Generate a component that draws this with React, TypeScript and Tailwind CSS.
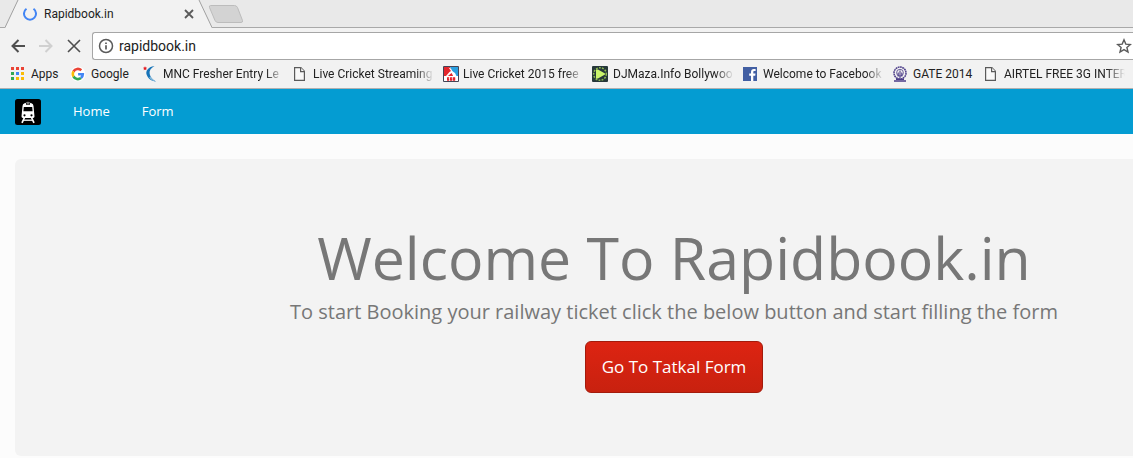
import React from "react";

function PageIcon() {
  return (
    <svg viewBox="0 0 16 16" className="size-4" fill="#f9f9f9" stroke="#5a5a5a" strokeWidth="1.2">
      <path d="M1.600 1.600h6.200l3.600 3.700v9.100H1.600z" />
      <path d="M7.600 1.600v4h3.800" />
    </svg>
  );
}

function AppsIcon() {
  const colors = ["#ea4335", "#ea4335", "#ea4335", "#34a853", "#4285f4", "#fbbc05", "#34a853", "#fbbc05", "#fbbc05"];
  return (
    <svg viewBox="0 0 16 16" className="size-4" shapeRendering="crispEdges">
      {colors.map((c, i) => (
        <rect key={i} x={(i % 3) * 5} y={1 + Math.floor(i / 3) * 5} width="3" height="3" fill={c} />
      ))}
    </svg>
  );
}

function GoogleIcon() {
  return (
    <svg viewBox="0 0 16 16" className="size-4">
      <circle cx="7" cy="8" r="7.4" fill="#fff" />
      <g fill="none" strokeWidth="2.6">
        <path d="M2.500 5.500A5 5 0 0 1 10.300 4.300" stroke="#ea4335" />
        <path d="M2.500 5.500A5 5 0 0 0 2.500 10.500" stroke="#fbbc05" />
        <path d="M2.500 10.500A5 5 0 0 0 10 12" stroke="#34a853" />
        <path d="M7.100 8.200H11.800A5 5 0 0 1 10 12" stroke="#4285f4" />
      </g>
    </svg>
  );
}

function MncIcon() {
  return (
    <svg viewBox="0 0 16 16" className="size-4">
      <path d="M11.500 0C4.500 1 2 5.500 4 9.500C5.500 12.800 8 15 13 15.500C9.500 13.500 7.300 11 6.700 8C6 4.800 7.800 2 11.500 0z" fill="#1673b8" />
      <path d="M6 11.500C8 14 10 15 13 15.500C10.500 14 9 13 7.500 11z" fill="#8fc1df" />
      <path d="M2 .300l.7 1.300 1.400.2-1 1 .3 1.400-1.400-.7-1.300.7.300-1.400-1-1 1.400-.2z" fill="#e21b22" />
    </svg>
  );
}

function CricketIcon() {
  return (
    <svg viewBox="0 0 16 16" className="size-4">
      <path d="M.5.500h15v15H.5z" fill="#fff" stroke="#445" />
      <path d="M1 1h6l3 9H1z" fill="#e4262c" />
      <path d="M7 1h8v9h-3z" fill="#2a9fe0" />
      <path d="M5.500 1.500 7.500 2.500 9 5l3 2 1.500 3H11L8.500 7 5.500 9.500 4.500 10H3l3.500-4L8 5z" fill="#fff" />
      <path d="M4 11.500h2v1H5v.5h1v1.500H4M7 11.500h2v1H8v.5h1v1.500H7M10 11.500h2v3h-2z" fill="#e4262c" stroke="#e4262c" strokeWidth=".5" />
    </svg>
  );
}

function MazaIcon() {
  return (
    <svg viewBox="0 0 16 16" className="-ml-px size-4">
      <rect width="16" height="16" rx="1" fill="#26383a" />
      <circle cx="8" cy="8" r="6.300" fill="none" stroke="#8fbd52" strokeWidth="1.500" strokeDasharray="1.800 1.300" />
      <path d="M4 3.500h2l7 4v1l-7 4H4z" fill="#c9f56c" />
    </svg>
  );
}

function FacebookIcon() {
  return (
    <svg viewBox="0 0 16 16" className="size-4">
      <path d="M0 1h14v14H0z" fill="#425fa3" />
      <path d="M8 15V9.700H6.200V7.600H8V6c0-2 1.100-3 2.900-3h1.700v2h-1.200c-.9 0-1.100.4-1.100 1.200v1.400h2.200l-.3 2.100h-1.900V15z" fill="#fff" />
    </svg>
  );
}

function GateIcon() {
  return (
    <svg viewBox="0 0 16 16" className="size-4" fill="none" stroke="#4b3c88">
      <circle cx="7" cy="7" r="6" strokeWidth="1.500" strokeDasharray="1.800 .5" />
      <circle cx="7" cy="6.700" r="3.400" strokeWidth=".8" />
      <path d="M7 4.500v7.500M5.200 6.500v4M8.800 6.500v4" strokeWidth="1.100" />
      <path d="M1 15h12M3 13.200h8" strokeWidth="1.600" />
    </svg>
  );
}

function TrainLogo() {
  return (
    <svg viewBox="0 0 26 26" className="size-[26px]">
      <rect width="26" height="26" rx="2.500" fill="#000" />
      <path d="M10.800 3.500Q13 2 15.200 3.500V5h-4.400z" fill="#999" />
      <path d="M9.500 4.200Q13 3.200 16.500 4.200Q18.400 5 18.500 7l1 10.500q0 1.500-2 1.500h-9q-2 0-2-1.500L7.500 7Q7.600 5 9.500 4.200z" fill="#fff" />
      <path d="M11 3.800h4v2h-4zM8.800 8h8.400l.4 4.200H8.400z" fill="#000" />
      <path d="M11.600 4.100h2.800v1.200h-2.800z" fill="#888" />
      <circle cx="9.500" cy="16.300" r="1.100" fill="#000" />
      <circle cx="16.500" cy="16.300" r="1.100" fill="#000" />
      <path d="M9.500 18.500 7 23.800M16.500 18.500 19 23.800" stroke="#fff" strokeWidth="1.700" />
      <path d="M8.500 21.200h9" stroke="#fff" strokeWidth="1.300" />
    </svg>
  );
}

const fade = "[mask-image:linear-gradient(to_right,black_85%,transparent)]";

const bookmarks = [
  { label: "Apps", icon: <AppsIcon />, size: "w-[31px]" },
  { label: "Google", icon: <GoogleIcon />, size: "w-[43px]" },
  { label: "MNC Fresher Entry Le", icon: <MncIcon />, size: `w-[121px] ${fade}` },
  { label: "Live Cricket Streaming", icon: <PageIcon />, size: `w-[121px] ${fade}` },
  { label: "Live Cricket 2015 free", icon: <CricketIcon />, size: `w-[121px] ${fade}` },
  { label: "DJMaza.Info Bollywoo", icon: <MazaIcon />, size: `w-[121px] ${fade}` },
  { label: "Welcome to Facebook", icon: <FacebookIcon />, size: `w-[121px] ${fade}` },
  { label: "GATE 2014", icon: <GateIcon />, size: "w-[62px]" },
  { label: "AIRTEL FREE 3G INTER", icon: <PageIcon />, size: `w-[121px] ${fade}` },
];

function TabStrip() {
  return (
    <div className="flex h-7 items-stretch border-b border-[#a9a9a9] bg-[#e9e9e9] pl-[5px]">
      <div className="-mb-px flex h-7">
        <svg viewBox="0 0 14 28" className="h-7 w-3.5 shrink-0">
          <path d="M0 28 13 0h1v28z" fill="#f2f2f2" />
          <path d="M0 27.500 13 0" fill="none" stroke="#a0a0a0" />
        </svg>
        <div className="flex w-[179px] items-center bg-[#f2f2f2] pl-1">
          <svg viewBox="0 0 14 14" className="size-3.5 shrink-0" fill="none" stroke="#4285f4" strokeWidth="2">
            <path d="M3.500 1.800A6 6 0 1 0 10.500 1.800" />
          </svg>
          <span className="ml-[7px] flex-1 text-[12px] leading-4">Rapidbook.in</span>
          <button type="button" aria-label="Close tab" className="mr-[3px] flex size-3 items-center justify-center">
            <svg viewBox="0 0 10 10" className="size-2.5" stroke="#5a5a5a" strokeWidth="1.800">
              <path d="M1 1l8 8M9 1 1 9" />
            </svg>
          </button>
        </div>
        <svg viewBox="0 0 14 28" className="h-7 w-3.5 shrink-0">
          <path d="M14 28 1 0H0v28z" fill="#f2f2f2" />
          <path d="M14 27.500 1 0" fill="none" stroke="#a0a0a0" />
        </svg>
      </div>
      <button type="button" aria-label="New tab" className="-ml-1 self-center">
        <svg viewBox="0 0 36 18" className="h-[18px] w-9">
          <path d="M2.500.500h24q2 0 3 2l5 13q.5 2-1.500 2H10q-2 0-3-2l-5.500-13q-.6-2 1-2z" fill="#d3d3d3" stroke="#bcbcbc" />
        </svg>
      </button>
    </div>
  );
}

function Toolbar() {
  return (
    <div className="flex h-8 items-end pl-[11px]">
      <div className="flex h-7 items-center gap-3">
        <button type="button" aria-label="Back">
          <svg viewBox="0 0 16 16" className="size-4" fill="none" stroke="#4f4f4f" strokeWidth="2">
            <path d="M14 8H1.500M7.500 2 1.500 8l6 6" />
          </svg>
        </button>
        <button type="button" aria-label="Forward">
          <svg viewBox="0 0 16 16" className="size-4" fill="none" stroke="#d0d0d0" strokeWidth="2">
            <path d="M0 8h12.500M6.500 2l6 6-6 6" />
          </svg>
        </button>
        <button type="button" aria-label="Stop loading">
          <svg viewBox="0 0 16 16" className="size-4" stroke="#4f4f4f" strokeWidth="1.600">
            <path d="M1 2l12 12M13 2 1 14" />
          </svg>
        </button>
      </div>
      <div className="ml-[9px] flex h-7 flex-1 items-center rounded-l-[3px] border border-r-0 border-[#a6a6a6] bg-white">
        <svg viewBox="0 0 16 16" className="ml-[5px] size-4 shrink-0" fill="none" stroke="#5a5a5a" strokeWidth="1.500">
          <circle cx="8" cy="8" r="6.500" />
          <path d="M8 7.200v4.300M8 4.400v1.700" strokeWidth="1.700" />
        </svg>
        <input
          aria-label="Address"
          defaultValue="rapidbook.in"
          className="ml-[5px] min-w-0 flex-1 bg-transparent text-[14px] leading-5 text-[#222] outline-none"
        />
        <button type="button" aria-label="Bookmark this page" className="mr-px">
          <svg viewBox="0 0 16 16" className="size-4" fill="none" stroke="#5a5a5a" strokeWidth="1.400">
            <path d="M8 1.800l1.800 4.300 4.600.4-3.500 3 1.100 4.600L8 11.600l-4 2.500 1.100-4.600-3.500-3 4.600-.4z" />
          </svg>
        </button>
      </div>
    </div>
  );
}

export default function App() {
  return (
    <div className="min-h-screen overflow-x-hidden bg-[#fcfcfc] font-['Open_Sans',sans-serif]">
      <header className="border-b border-[#b0b0b0] bg-[#f2f2f2] font-['Roboto',sans-serif] text-[#222]">
        <TabStrip />
        <Toolbar />
        <nav aria-label="Bookmarks" className="flex h-7 items-center gap-[9px] overflow-hidden pl-[11px]">
          {bookmarks.map((b) => (
            <a key={b.label} href="#" className="flex shrink-0 items-center gap-1 text-[12px] leading-4">
              <span className="w-4">{b.icon}</span>
              <span className={`overflow-hidden whitespace-nowrap ${b.size}`}>{b.label}</span>
            </a>
          ))}
        </nav>
      </header>

      <nav aria-label="Main" className="flex h-[45px] items-center bg-[#049cd2] pl-[15px] text-[13px] font-medium leading-5 text-white">
        <a href="#" aria-label="Rapidbook">
          <TrainLogo />
        </a>
        <a href="#" className="ml-4 px-4 pb-0.5">Home</a>
        <a href="#" className="px-4 pb-0.5">Form</a>
      </nav>

      <main className="-mr-[200px] ml-[15px] mt-[25px] rounded-md bg-[#f3f3f3] px-[60px] pb-[63px] pt-[68px] text-center text-[#777]">
        <h1 className="text-[59px] leading-[60px]">Welcome To Rapidbook.in</h1>
        <p className="mt-2.5 text-[20px] leading-[30px]">
          To start Booking your railway ticket click the below button and start filling the form
        </p>
        <a
          href="#"
          className="mt-3.5 inline-block rounded-md border border-[#a31b0c] bg-linear-to-b from-[#dd2412] to-[#c8210f] px-4 py-[11px] text-[17px] leading-7 text-white"
        >
          Go To Tatkal Form
        </a>
      </main>
    </div>
  );
}
